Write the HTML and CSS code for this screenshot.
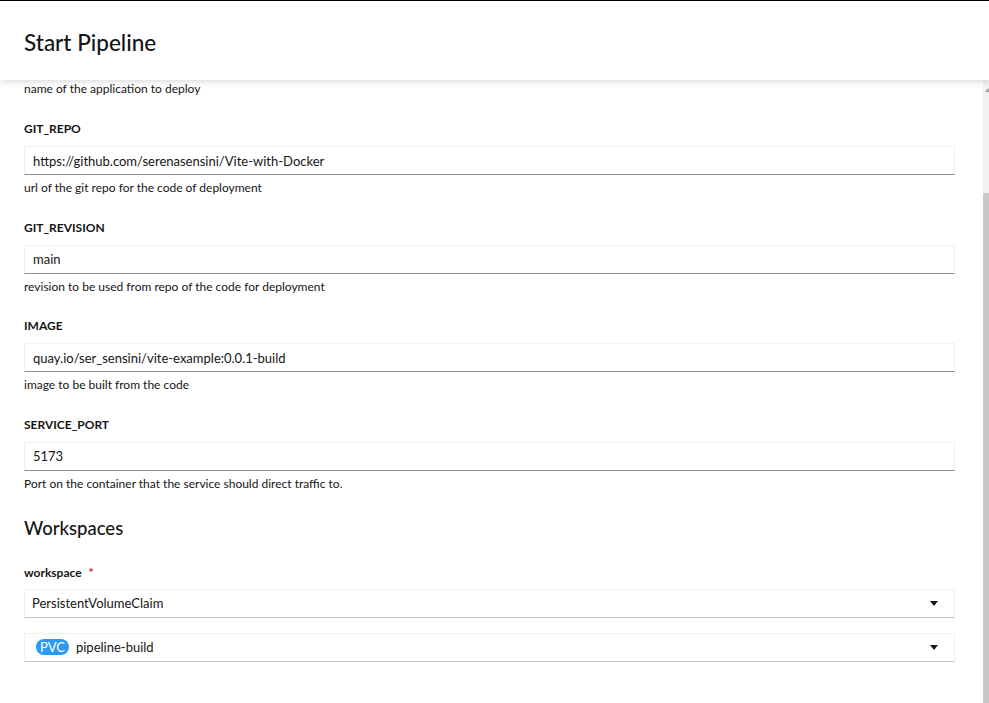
FILE: index.html
```html
<!DOCTYPE html>
<html lang="en">

<head>
	<title>Start Pipeline</title>
	<meta charset="utf-8" />
	<meta name="viewport" content="width=device-width,initial-scale=1" />
	<link rel="stylesheet" href="styles.css">
</head>

<body>
	<div class="modal">
		<header class="modal-header">
			<h1>Start Pipeline</h1>
		</header>

		<div class="modal-body">
			<div class="helper first">name of the application to deploy</div>

			<div class="field">
				<label for="git-repo">GIT_REPO</label>
				<input type="text" id="git-repo" value="https://github.com/serenasensini/Vite-with-Docker">
				<div class="helper">url of the git repo for the code of deployment</div>
			</div>

			<div class="field">
				<label for="git-revision">GIT_REVISION</label>
				<input type="text" id="git-revision" value="main">
				<div class="helper">revision to be used from repo of the code for deployment</div>
			</div>

			<div class="field">
				<label for="image">IMAGE</label>
				<input type="text" id="image" value="quay.io/ser_sensini/vite-example:0.0.1-build">
				<div class="helper">image to be built from the code</div>
			</div>

			<div class="field">
				<label for="service-port">SERVICE_PORT</label>
				<input type="text" id="service-port" value="5173">
				<div class="helper">Port on the container that the service should direct traffic to.</div>
			</div>

			<h2>Workspaces</h2>

			<div class="field">
				<label class="lower">workspace <span class="required">*</span></label>
				<div class="select">
					<span>PersistentVolumeClaim</span>
					<svg class="caret" viewBox="0 0 8 5" width="8" height="5"><path d="M0 0h8L4 5z" /></svg>
				</div>
				<div class="select">
					<span><span class="badge">PVC</span>pipeline-build</span>
					<svg class="caret" viewBox="0 0 8 5" width="8" height="5"><path d="M0 0h8L4 5z" /></svg>
				</div>
			</div>
		</div>

		<div class="scrollbar">
			<div class="scroll-up"></div>
			<div class="scroll-thumb"></div>
		</div>
	</div>
</body>

</html>
```
FILE: styles.css
```css
:root {
	--text-color: #151515;
	--border-light: #f0f0f0;
	--border-dark: #8a8d90;
	--padding: 24px;
	--blue: #2b9af3;
	--required: #c9190b;
}

*,
*:before,
*:after {
	box-sizing: border-box;
	margin: 0;
	padding: 0;
}

body {
	height: 100vh;
	overflow: hidden;
	border-top: 1px solid #000;
	background-color: #fff;
	color: var(--text-color);
	font-family: "Lato", "Liberation Sans", sans-serif;
}

.modal {
	position: relative;
	height: 100%;
}

.modal-header {
	position: relative;
	z-index: 1;
	height: 79px;
	padding: 26px var(--padding) 0;
	background-color: #fff;
	box-shadow: 0 3px 6px -1px rgba(3, 3, 3, 0.14);
}

h1 {
	font-size: 22.5px;
	font-weight: 500;
	line-height: 31px;
}

.modal-body {
	padding: 0 34px 0 var(--padding);
}

.helper {
	margin-top: 4px;
	font-size: 12px;
	line-height: 18px;
}

.helper.first {
	margin-top: 0;
	margin-bottom: 22px;
}

.field {
	display: flex;
	flex-direction: column;
	margin-bottom: 21.5px;
}

label {
	margin-bottom: 8px;
	font-size: 12px;
	font-weight: 700;
	line-height: 18px;
}

label.lower {
	margin-bottom: 7px;
}

.required {
	margin-left: 4px;
	color: var(--required);
}

input {
	height: 29px;
	padding: 0 8px;
	border: 1px solid var(--border-light);
	border-bottom-color: var(--border-dark);
	font-family: inherit;
	font-size: 13px;
	color: var(--text-color);
	outline: none;
}

h2 {
	margin-top: 24.5px;
	margin-bottom: 23.5px;
	font-size: 18.5px;
	font-weight: 500;
	line-height: 23px;
}

.select {
	display: flex;
	align-items: center;
	justify-content: space-between;
	height: 29px;
	padding: 0 16px 0 7px;
	border: 1px solid var(--border-light);
	border-bottom-color: #c4c6c8;
	font-size: 13px;
}

.select + .select {
	margin-top: 15px;
}

.badge {
	display: inline-block;
	margin: 0 7px 0 4px;
	padding: 0 4px;
	border-radius: 30px;
	background-color: var(--blue);
	color: #fff;
	font-size: 13px;
	line-height: 16px;
}

.caret {
	fill: var(--text-color);
}

.scrollbar {
	position: absolute;
	top: 79px;
	right: 0;
	bottom: 0;
	width: 6px;
	display: flex;
	flex-direction: column;
	background-color: #f1f1f1;
}

.scroll-up {
	width: 0;
	height: 0;
	margin: 8px 0 0 2px;
	border-left: 3px solid transparent;
	border-right: 3px solid transparent;
	border-bottom: 4px solid #a3a3a3;
}

.scroll-thumb {
	flex: 1;
	margin-top: 101px;
	background-color: #c8c8c8;
}
```
